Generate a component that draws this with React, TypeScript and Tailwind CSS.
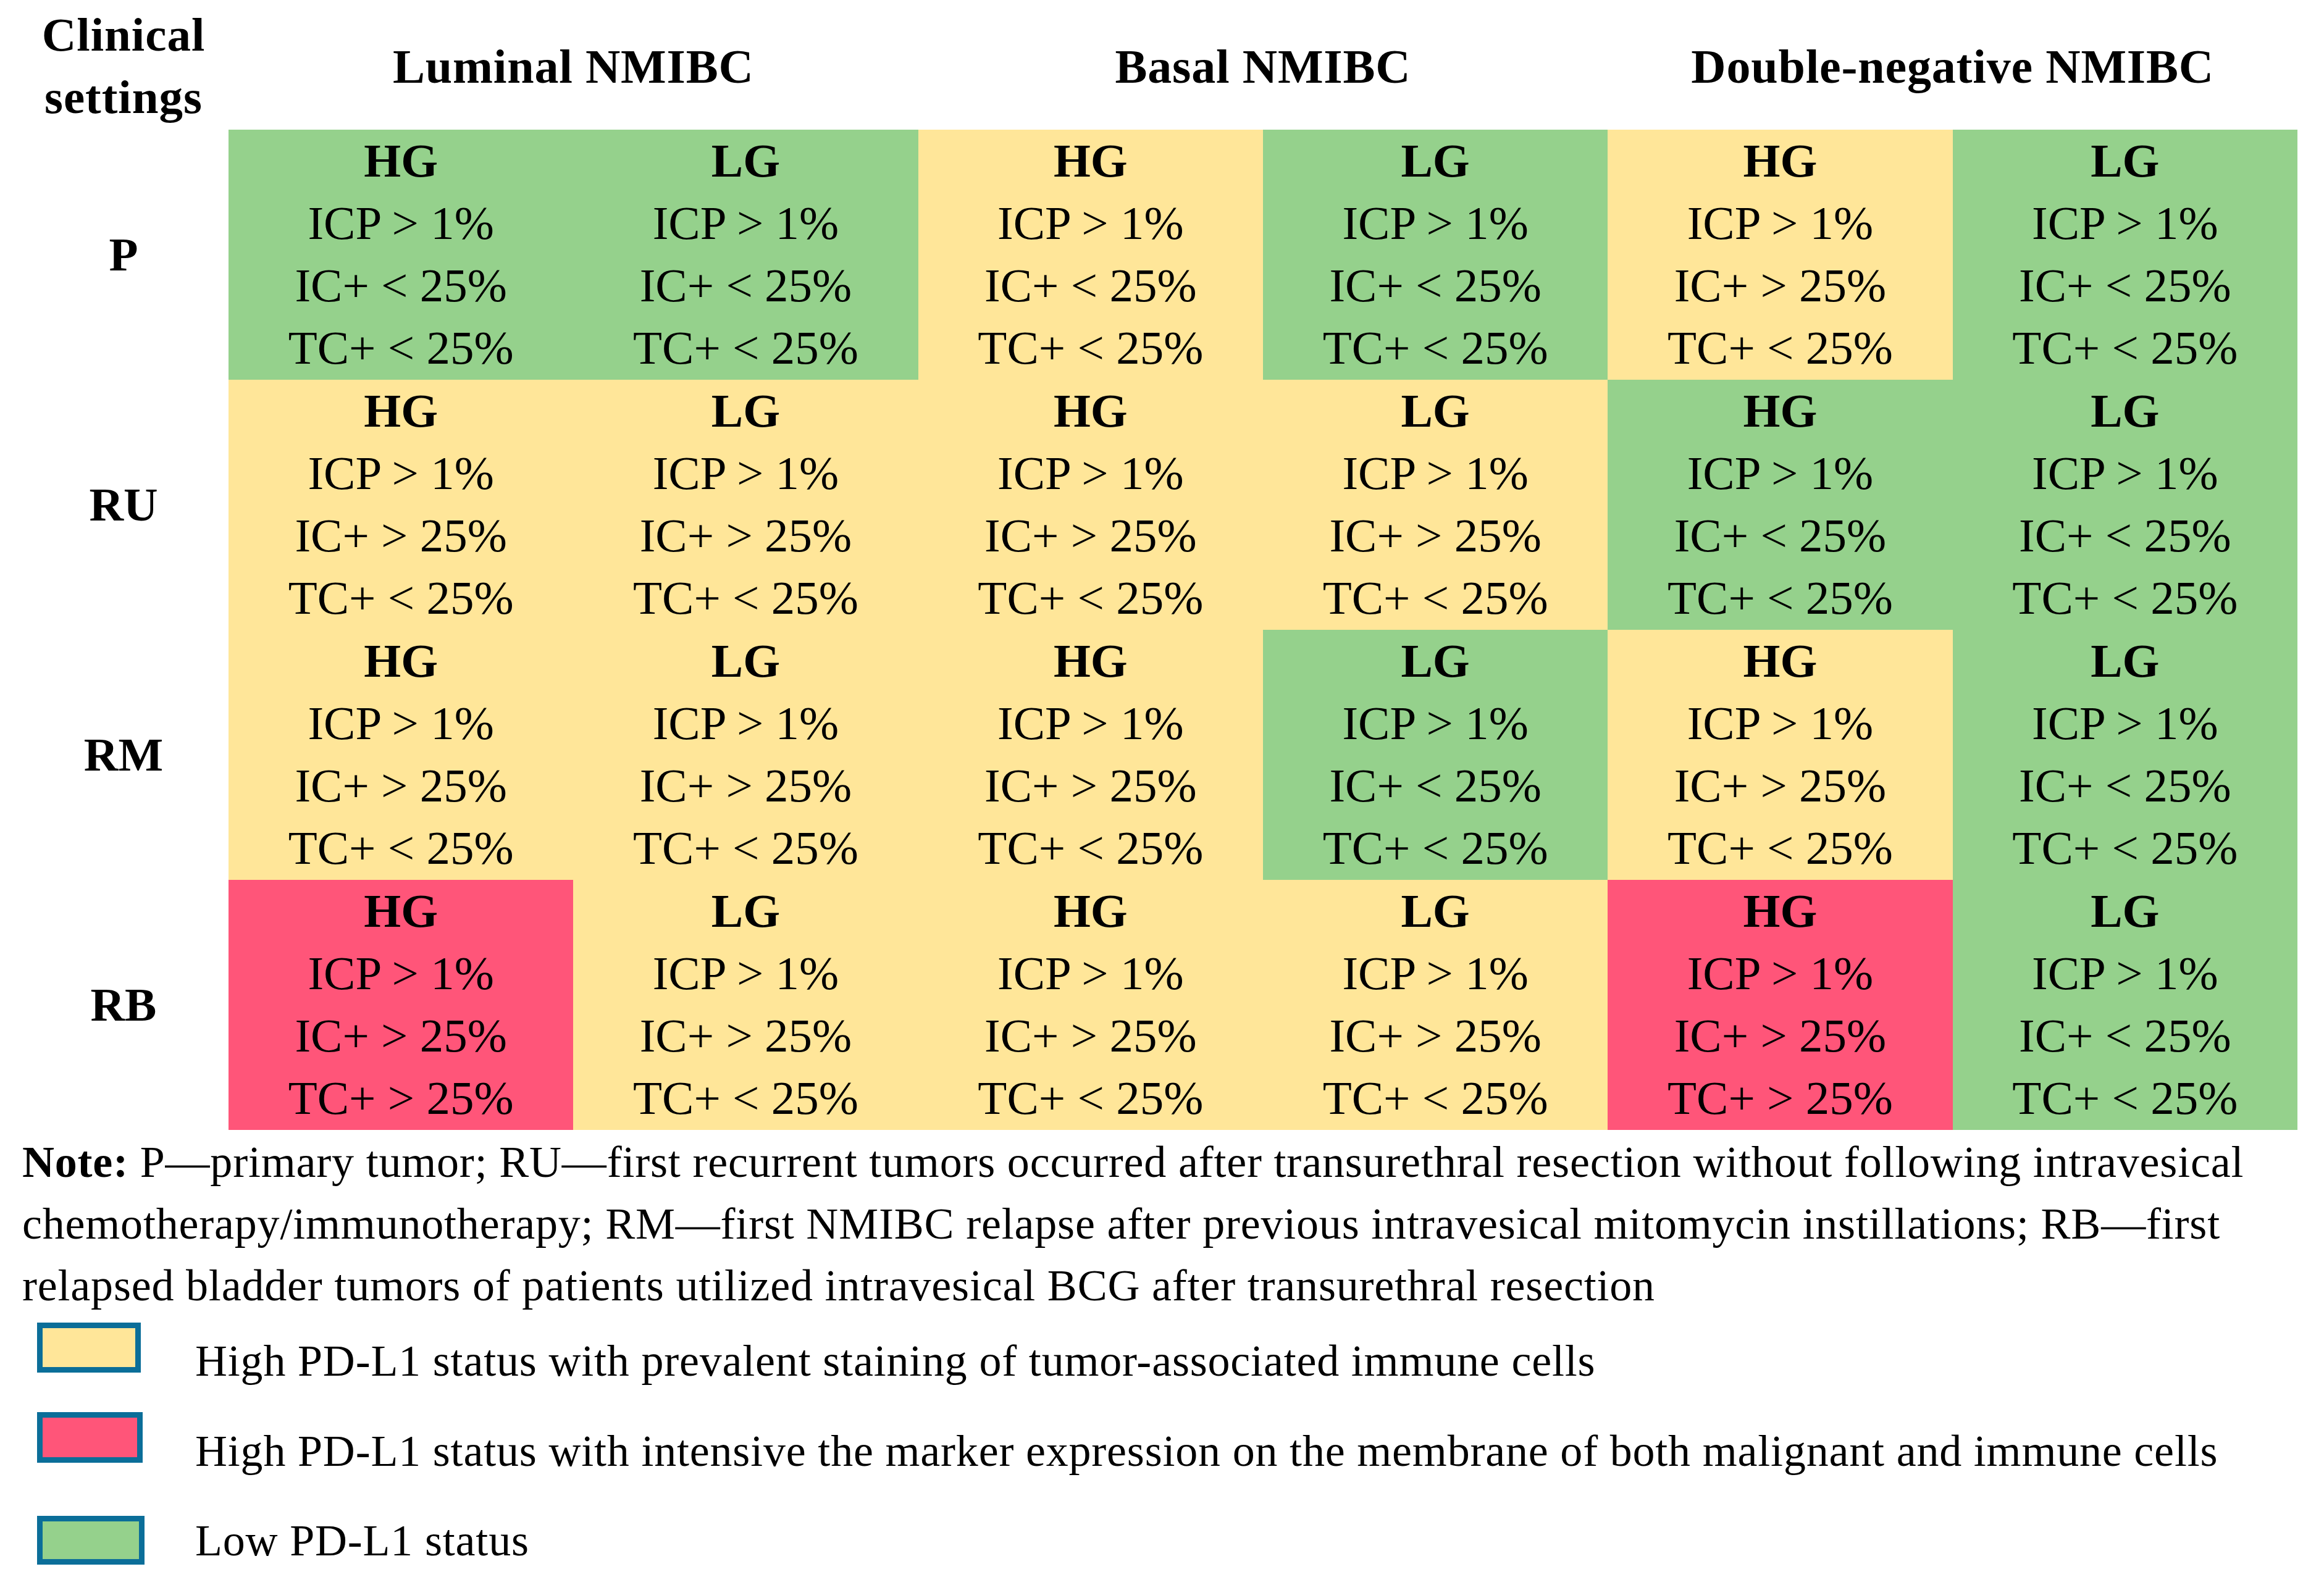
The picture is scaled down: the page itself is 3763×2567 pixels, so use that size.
import React from "react";

type Color = "G" | "Y" | "R";
type Cell = { c: Color; ic: ">" | "<"; tc: ">" | "<" };

const bg: Record<Color, string> = {
  G: "bg-[#95d18c]",
  Y: "bg-[#ffe699]",
  R: "bg-[#ff5579]",
};

const rows: { label: string; cells: Cell[] }[] = [
  {
    label: "P",
    cells: [
      { c: "G", ic: "<", tc: "<" },
      { c: "G", ic: "<", tc: "<" },
      { c: "Y", ic: "<", tc: "<" },
      { c: "G", ic: "<", tc: "<" },
      { c: "Y", ic: ">", tc: "<" },
      { c: "G", ic: "<", tc: "<" },
    ],
  },
  {
    label: "RU",
    cells: [
      { c: "Y", ic: ">", tc: "<" },
      { c: "Y", ic: ">", tc: "<" },
      { c: "Y", ic: ">", tc: "<" },
      { c: "Y", ic: ">", tc: "<" },
      { c: "G", ic: "<", tc: "<" },
      { c: "G", ic: "<", tc: "<" },
    ],
  },
  {
    label: "RM",
    cells: [
      { c: "Y", ic: ">", tc: "<" },
      { c: "Y", ic: ">", tc: "<" },
      { c: "Y", ic: ">", tc: "<" },
      { c: "G", ic: "<", tc: "<" },
      { c: "Y", ic: ">", tc: "<" },
      { c: "G", ic: "<", tc: "<" },
    ],
  },
  {
    label: "RB",
    cells: [
      { c: "R", ic: ">", tc: ">" },
      { c: "Y", ic: ">", tc: "<" },
      { c: "Y", ic: ">", tc: "<" },
      { c: "Y", ic: ">", tc: "<" },
      { c: "R", ic: ">", tc: ">" },
      { c: "G", ic: "<", tc: "<" },
    ],
  },
];

export default function App() {
  return (
    <div className="w-[3763px] h-[2567px] bg-white text-black font-['Liberation_Serif',serif] overflow-hidden">
      {/* header */}
      <div className="flex h-[210px] pt-[4px]">
        <div className="w-[370px] pl-[30px] flex items-center justify-center text-center font-bold text-[77px] leading-[101px] tracking-[1px]">
          Clinical
          <br />
          settings
        </div>
        {["Luminal NMIBC", "Basal NMIBC", "Double-negative NMIBC"].map((h) => (
          <div
            key={h}
            className="w-[1116.67px] flex items-center justify-center font-bold text-[78px] leading-[101px] tracking-[0.8px] whitespace-nowrap"
          >
            {h}
          </div>
        ))}
      </div>

      {/* body */}
      <div className="flex">
        <div className="w-[370px] pl-[30px] flex flex-col">
          {rows.map((r) => (
            <div
              key={r.label}
              className="h-[405px] flex items-center justify-center font-bold text-[77px] leading-[101px]"
            >
              {r.label}
            </div>
          ))}
        </div>
        <div className="w-[3350px] grid grid-cols-6">
          {rows.map((r) =>
            r.cells.map((cell, i) => (
              <div
                key={r.label + i}
                className={`h-[405px] flex flex-col items-center text-center text-[77px] leading-[101px] whitespace-nowrap ${bg[cell.c]}`}
              >
                <div className="font-bold">{i % 2 === 0 ? "HG" : "LG"}</div>
                <div>ICP &gt; 1%</div>
                <div>IC+ {cell.ic} 25%</div>
                <div>TC+ {cell.tc} 25%</div>
              </div>
            ))
          )}
        </div>
      </div>

      {/* note */}
      <div className="pl-[36px] pt-[2px] text-[72px] leading-[100px] tracking-[0.8px] whitespace-nowrap">
        <span className="font-bold">Note:</span> P—primary tumor; RU—first recurrent tumors occurred after transurethral
        resection without following intravesical
        <br />
        chemotherapy/immunotherapy; RM—first NMIBC relapse after previous intravesical mitomycin instillations; RB—first
        <br />
        relapsed bladder tumors of patients utilized intravesical BCG after transurethral resection
      </div>

      {/* legend */}
      <div className="pl-[60px] text-[72px] leading-[100px] tracking-[0.8px] whitespace-nowrap">
        <div className="flex h-[146px]">
          <div className="w-[256px] shrink-0">
            <div className="mt-[10px] w-[168px] h-[81px] border-[9px] border-[#0b6e99] bg-[#ffe699]" />
          </div>
          <div className="mt-[22px]">High PD-L1 status with prevalent staining of tumor-associated immune cells</div>
        </div>
        <div className="flex h-[146px]">
          <div className="w-[256px] shrink-0">
            <div className="mt-[9px] w-[171px] h-[82px] border-[9px] border-[#0b6e99] bg-[#ff5579]" />
          </div>
          <div className="mt-[22px]">
            High PD-L1 status with intensive the marker expression on the membrane of both malignant and immune cells
          </div>
        </div>
        <div className="flex h-[143px]">
          <div className="w-[256px] shrink-0">
            <div className="mt-[31px] w-[174px] h-[79px] border-[9px] border-[#0b6e99] bg-[#95d18c]" />
          </div>
          <div className="mt-[21px]">Low PD-L1 status</div>
        </div>
      </div>
    </div>
  );
}
